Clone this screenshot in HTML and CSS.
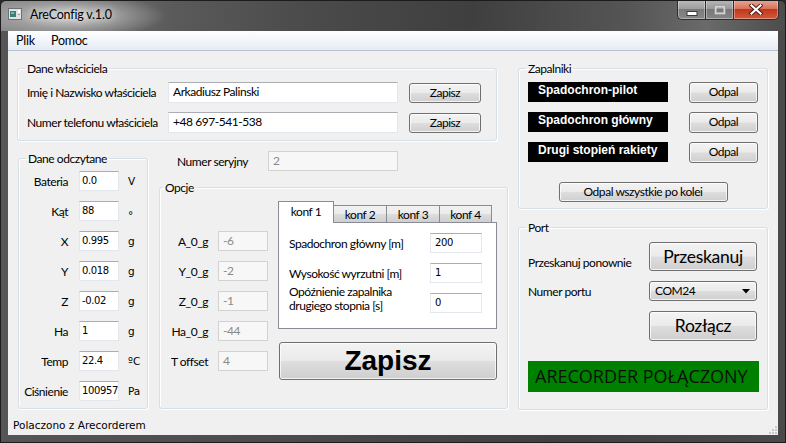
FILE: index.html
```html
<!DOCTYPE html>
<html lang="pl">
<head>
<meta charset="utf-8">
<title>AreConfig v.1.0</title>
<link rel="stylesheet" href="styles.css">
</head>
<body>
<div class="window">
  <div class="titlebar">
    <svg class="app-icon" width="14" height="12" viewBox="0 0 14 12">
      <rect x="0.5" y="0.5" width="13" height="11" fill="#dfe3e4" stroke="#6d7375"/>
      <rect x="2" y="3" width="6" height="6" fill="#3c8078"/>
      <rect x="3" y="4" width="3" height="2" fill="#7fb7ad"/>
      <rect x="10" y="2" width="2" height="3" fill="#ffffff"/>
      <rect x="10" y="6" width="2" height="1" fill="#9aa0a2"/>
    </svg>
    <span class="title">AreConfig v.1.0</span>
    <div class="caption">
      <div class="cbtn cmin">
        <svg width="12" height="8" viewBox="0 0 12 8"><rect x="1" y="3.5" width="10" height="4" fill="#fff" stroke="#3b3b3b"/></svg>
      </div>
      <div class="cbtn cmax">
        <svg width="12" height="10" viewBox="0 0 12 10"><rect x="1.5" y="1.5" width="9" height="7" fill="none" stroke="#d6d6d6" stroke-width="2"/><rect x="0.5" y="0.5" width="11" height="9" fill="none" stroke="#8a8a8a" stroke-width="1" opacity="0.6"/></svg>
      </div>
      <div class="cbtn cclose">
        <svg width="14" height="11" viewBox="0 0 14 11"><path d="M2.5 1.5 L11.5 9.5 M11.5 1.5 L2.5 9.5" stroke="#4a1a10" stroke-width="4" stroke-linecap="square"/><path d="M2.5 1.5 L11.5 9.5 M11.5 1.5 L2.5 9.5" stroke="#ffffff" stroke-width="2.2" stroke-linecap="square"/></svg>
      </div>
    </div>
  </div>
  <div class="client">
    <div class="menubar"><span class="menu">Plik</span><span class="menu">Pomoc</span></div>
    <div class="content">
      <div class="col-left">
        <fieldset class="group owner">
          <legend>Dane właściciela</legend>
          <div class="orow">
            <span class="olabel">Imię i Nazwisko właściciela</span>
            <div class="edit owner-edit">Arkadiusz Palinski</div>
            <button class="btn obtn">Zapisz</button>
          </div>
          <div class="orow">
            <span class="olabel">Numer telefonu właściciela</span>
            <div class="edit owner-edit">+48 697-541-538</div>
            <button class="btn obtn">Zapisz</button>
          </div>
        </fieldset>
        <div class="lower">
          <fieldset class="group data">
            <legend>Dane odczytane</legend>
            <div class="drow"><span class="dlabel">Bateria</span><div class="edit dval num">0.0</div><span class="unit tah">V</span></div>
            <div class="drow"><span class="dlabel">Kąt</span><div class="edit dval num">88</div><span class="unit tah deg">°</span></div>
            <div class="drow"><span class="dlabel">X</span><div class="edit dval num">0.995</div><span class="unit tah">g</span></div>
            <div class="drow"><span class="dlabel">Y</span><div class="edit dval num">0.018</div><span class="unit tah">g</span></div>
            <div class="drow"><span class="dlabel">Z</span><div class="edit dval num">-0.02</div><span class="unit tah">g</span></div>
            <div class="drow"><span class="dlabel">Ha</span><div class="edit dval num">1</div><span class="unit tah">g</span></div>
            <div class="drow"><span class="dlabel">Temp</span><div class="edit dval num">22.4</div><span class="unit tah">ºC</span></div>
            <div class="drow"><span class="dlabel">Ciśnienie</span><div class="edit dval num">100957</div><span class="unit tah">Pa</span></div>
          </fieldset>
          <div class="mid">
            <div class="serial">
              <span class="slabel">Numer seryjny</span>
              <div class="edit disabled sval">2</div>
            </div>
            <fieldset class="group opcje">
              <legend>Opcje</legend>
              <div class="opts">
                <div class="offsets">
                  <div class="frow"><span class="flabel">A_0_g</span><div class="edit disabled fval">-6</div></div>
                  <div class="frow"><span class="flabel">Y_0_g</span><div class="edit disabled fval">-2</div></div>
                  <div class="frow"><span class="flabel">Z_0_g</span><div class="edit disabled fval">-1</div></div>
                  <div class="frow"><span class="flabel">Ha_0_g</span><div class="edit disabled fval">-44</div></div>
                  <div class="frow"><span class="flabel">T offset</span><div class="edit disabled fval">4</div></div>
                </div>
                <div class="tabarea">
                  <div class="tabs">
                    <div class="tab active">konf 1</div>
                    <div class="tab t2">konf 2</div>
                    <div class="tab t3">konf 3</div>
                    <div class="tab t4">konf 4</div>
                  </div>
                  <div class="panel">
                    <div class="prow"><span class="plabel">Spadochron główny [m]</span><div class="edit pval num">200</div></div>
                    <div class="prow"><span class="plabel">Wysokość wyrzutni [m]</span><div class="edit pval num">1</div></div>
                    <div class="prow top"><span class="plabel two">Opóźnienie zapalnika<br>drugiego stopnia [s]</span><div class="edit pval num">0</div></div>
                  </div>
                  <button class="btn big">Zapisz</button>
                </div>
              </div>
            </fieldset>
          </div>
        </div>
      </div>
      <div class="col-right">
        <fieldset class="group zap">
          <legend>Zapalniki</legend>
          <div class="zrow"><div class="fuse">Spadochron-pilot</div><button class="btn zbtn">Odpal</button></div>
          <div class="zrow"><div class="fuse">Spadochron główny</div><button class="btn zbtn">Odpal</button></div>
          <div class="zrow"><div class="fuse">Drugi stopień rakiety</div><button class="btn zbtn">Odpal</button></div>
          <div class="allrow"><button class="btn allbtn">Odpal wszystkie po kolei</button></div>
        </fieldset>
        <fieldset class="group port">
          <legend>Port</legend>
          <div class="scanrow"><span class="plab scanlab">Przeskanuj ponownie</span><button class="btn pbtn">Przeskanuj</button></div>
          <div class="comborow"><span class="plab">Numer portu</span>
            <div class="combo"><span>COM24</span>
              <svg width="8" height="5" viewBox="0 0 8 5"><path d="M0 0 H8 L4 4.5 Z" fill="#000"/></svg>
            </div>
          </div>
          <div class="discrow"><button class="btn pbtn">Rozłącz</button></div>
          <div class="connected">ARECORDER POŁĄCZONY</div>
        </fieldset>
      </div>
    </div>
    <div class="statusbar">
      <span class="tah">Polaczono z Arecorderem</span>
      <svg class="grip" width="9" height="9" viewBox="0 0 9 9">
        <g fill="#c9c9c9">
          <rect x="7" y="1" width="2" height="2"/>
          <rect x="4" y="4" width="2" height="2"/><rect x="7" y="4" width="2" height="2"/>
          <rect x="1" y="7" width="2" height="2"/><rect x="4" y="7" width="2" height="2"/><rect x="7" y="7" width="2" height="2"/>
        </g>
      </svg>
    </div>
  </div>
</div>
</body>
</html>
```

FILE: styles.css
```css
* { box-sizing: border-box; }
html, body { margin: 0; padding: 0; }
body {
  width: 786px;
  height: 443px;
  overflow: hidden;
  background: #2a2a2a;
  font-family: "Lato", "Open Sans", sans-serif;
  font-size: 12px;
  letter-spacing: -0.45px;
  color: #000;
}
.tah { font-family: "DejaVu Sans", sans-serif; font-size: 10.5px; letter-spacing: 0; }
.num { font-family: "DejaVu Sans", sans-serif; font-size: 10px; letter-spacing: -0.35px; }

.window {
  width: 786px;
  height: 443px;
  display: flex;
  flex-direction: column;
  border: 1px solid #1c1c1c;
  border-radius: 6px 6px 0 0;
  background: linear-gradient(90deg, #555 0%, #4a4a4a 40%, #404040 70%, #4a4a4a 100%);
  overflow: hidden;
}

/* title bar */
.titlebar {
  height: 30px;
  flex: none;
  display: flex;
  align-items: flex-start;
  background:
    radial-gradient(ellipse 95px 22px at 70px 15px, rgba(225,225,225,0.9), rgba(190,190,190,0.45) 60%, rgba(0,0,0,0) 100%),
    linear-gradient(90deg, #8a8a8a 0%, #777 8%, #5a5a5a 22%, #4a4a4a 40%, #3f3f3f 60%, #555 80%, #6a6a6a 90%, #4c4c4c 100%);
}
.app-icon { margin: 7px 0 0 7px; flex: none; }
.title {
  margin-left: 8px;
  line-height: 28px;
  font-size: 12.5px;
  letter-spacing: -0.2px;
  color: #000;
  text-shadow: 0 0 6px rgba(255,255,255,0.9);
}
.caption {
  margin-left: auto;
  margin-right: 6px;
  margin-top: -1px;
  display: flex;
}
.cbtn {
  height: 20px;
  border: 1px solid #2e2e2e;
  border-top: none;
  display: flex;
  align-items: center;
  justify-content: center;
  box-shadow: inset 0 0 0 1px rgba(255,255,255,0.35);
}
.cmin {
  width: 28px;
  border-right: none;
  border-radius: 0 0 0 5px;
  background: linear-gradient(#bcbcbc 0%, #9e9e9e 45%, #7a7a7a 50%, #888 100%);
}
.cmax {
  width: 28px;
  border-right: none;
  background: linear-gradient(#b8b8b8 0%, #9a9a9a 45%, #787878 50%, #868686 100%);
}
.cmin svg { margin-top: 4px; }
.cclose {
  width: 46px;
  border-radius: 0 0 5px 0;
  background: linear-gradient(#e9a896 0%, #d8735c 45%, #c1371c 50%, #d25a3b 100%);
}

/* client */
.client {
  margin: 0 7px;
  width: 770px;
  height: 404px;
  flex: none;
  background: #f0f0f0;
  display: flex;
  flex-direction: column;
}
.menubar {
  height: 20px;
  flex: none;
  display: flex;
  align-items: center;
  background: linear-gradient(#fdfeff 0%, #f2f5fa 50%, #e4eaf4 100%);
  border-bottom: 1px solid #b9c2cf;
}
.menu { padding: 0 8px; line-height: 18px; font-size: 12.5px; letter-spacing: -0.2px; }

.content {
  height: 364px;
  flex: none;
  display: flex;
  gap: 10px;
  padding: 11px 0 0 9px;
}
.col-left { width: 491px; display: flex; flex-direction: column; }
.col-right { width: 250px; display: flex; flex-direction: column; }

/* group boxes */
.group {
  margin: 0;
  min-width: 0;
  border: 1px solid #d5dfe5;
  border-radius: 3px;
  box-shadow: inset 1px 1px 0 #fff, 1px 1px 0 #fff;
}
.group legend {
  padding: 0 2px;
  margin-left: -2px;
  line-height: 13px;
}

/* edits and buttons */
.edit {
  background: #fff;
  border: 1px solid #e2e7ee;
  border-top-color: #abadb3;
  height: 20px;
  line-height: 18px;
  padding-left: 3px;
  white-space: nowrap;
  overflow: hidden;
}
.edit.disabled {
  background: #f7f7f7;
  border-color: #d2d2d2;
  color: #8a8a8a;
}
.btn {
  font-family: "Lato", "Open Sans", sans-serif;
  font-size: 12px;
  letter-spacing: -0.45px;
  color: #000;
  padding: 0;
  margin: 0;
  border: 1px solid #707070;
  border-radius: 3px;
  background: linear-gradient(#f3f3f3 0%, #ebebeb 48%, #dddddd 52%, #cfcfcf 100%);
  box-shadow: inset 0 0 0 1px rgba(255,255,255,0.75);
  height: 20px;
  line-height: 16px;
}

/* owner */
.owner { width: 480px; padding: 2px 9px 3px 9px; }
.orow { height: 30px; display: flex; align-items: center; }
.olabel { width: 141px; flex: none; white-space: nowrap; }
.owner-edit { width: 230px; height: 21px; padding-left: 4px; }
.obtn { width: 72px; margin-left: 11px; margin-top: 1px; }

.lower { display: flex; gap: 10px; margin-top: 9px; }

/* data */
.data { width: 130px; margin: 2px 0 0 1px; padding: 1px 0 2px 1px; flex: none; }
.data legend { margin-left: 6px; }
.drow { height: 30px; display: flex; align-items: center; }
.dlabel { width: 48px; text-align: right; flex: none; }
.dval { width: 40px; margin-left: 11px; flex: none; padding-left: 2px; }
.unit { margin-left: 9px; }
.unit.deg { margin-top: 7px; }

/* middle */
.mid { width: 350px; display: flex; flex-direction: column; }
.serial { display: flex; align-items: center; height: 20px; margin-top: 1px; }
.slabel { margin-left: 19px; width: 91px; }
.sval { width: 130px; padding-left: 4px; }
.opcje { flex: 1; margin: 10px 0 0 1px; width: 349px; padding: 0 10px 0 0; }
.opcje legend { margin-left: 3px; }
.opts { display: flex; }
.offsets { width: 108px; margin-top: 32px; }
.frow { height: 30px; display: flex; align-items: center; }
.flabel { width: 48px; text-align: right; }
.fval { width: 50px; margin-left: 10px; padding-left: 4px; }

.tabarea { width: 219px; margin: 7px 0 0 10px; display: flex; flex-direction: column; }
.tabs { height: 21px; display: flex; align-items: flex-end; }
.tab {
  height: 17px;
  width: 53px;
  border: 1px solid #898c95;
  border-bottom: none;
  border-left: none;
  background: linear-gradient(#f2f2f2 0%, #ebebeb 50%, #dddddd 51%, #cfcfcf 100%);
  text-align: center;
  line-height: 17px;
}
.tab.active {
  width: 56px;
  border-left: 1px solid #898c95;
  background: #fff;
  line-height: 20px;
  position: relative;
  z-index: 1;
  margin-bottom: -1px;
  height: 22px;
}
.tab.t4 { width: 52px; }
.panel {
  height: 107px;
  background: #fff;
  border: 1px solid #898c95;
  padding: 5px 0 0 10px;
}
.prow { height: 30px; display: flex; align-items: center; }
.prow.top { align-items: flex-start; }
.plabel { width: 141px; flex: none; white-space: nowrap; }
.plabel.two { line-height: 14px; margin-top: -3px; }
.pval { width: 52px; padding-left: 4px; }
.prow.top .pval { margin-top: 5px; }
.big {
  margin: 13px 0 0 1px;
  width: 218px;
  height: 38px;
  font-family: "Liberation Sans", Arial, sans-serif;
  font-weight: bold;
  font-size: 28px;
  letter-spacing: 0;
  line-height: 34px;
}

/* zapalniki */
.zap { padding: 2px 9px 6px 9px; }
.zrow { height: 30px; display: flex; align-items: center; }
.fuse {
  width: 140px;
  height: 20px;
  background: #000;
  color: #fff;
  font-family: "Liberation Sans", Arial, sans-serif;
  font-weight: bold;
  font-size: 12px;
  letter-spacing: 0;
  line-height: 17px;
  padding-left: 10px;
  white-space: nowrap;
}
.zbtn { width: 69px; margin-left: 21px; height: 21px; }
.allrow { margin-top: 15px; display: flex; justify-content: center; }
.allbtn { width: 169px; }

/* port */
.port { margin-top: 12px; padding: 8px 8px 17px 9px; }
.port legend { margin-left: -2px; }
.scanrow, .comborow, .discrow { display: flex; align-items: center; }
.plab { width: 121px; flex: none; white-space: nowrap; }
.scanlab { padding-top: 11px; }
.pbtn { width: 108px; height: 29px; font-size: 17.5px; letter-spacing: -0.3px; line-height: 24px; }
.comborow { margin-top: 10px; }
.combo {
  width: 108px;
  height: 20px;
  border: 1px solid #707070;
  border-radius: 3px;
  background: linear-gradient(#f3f3f3 0%, #ebebeb 48%, #dddddd 52%, #cfcfcf 100%);
  box-shadow: inset 0 0 0 1px rgba(255,255,255,0.75);
  display: flex;
  align-items: center;
  justify-content: space-between;
  padding: 0 6px 0 5px;
  line-height: 16px;
}
.discrow { margin-top: 10px; padding-left: 121px; }
.discrow .pbtn { height: 30px; }
.connected {
  margin-top: 20px;
  width: 231px;
  height: 31px;
  background: #008000;
  color: #071207;
  font-family: "Open Sans", sans-serif;
  font-size: 18px;
  letter-spacing: 0;
  line-height: 30px;
  padding-left: 7px;
  white-space: nowrap;
}

/* status bar */
.statusbar {
  height: 20px;
  flex: none;
  display: flex;
  align-items: center;
  padding-left: 5px;
  padding-right: 1px;
}
.statusbar .grip { margin-left: auto; margin-top: 9px; }
```
